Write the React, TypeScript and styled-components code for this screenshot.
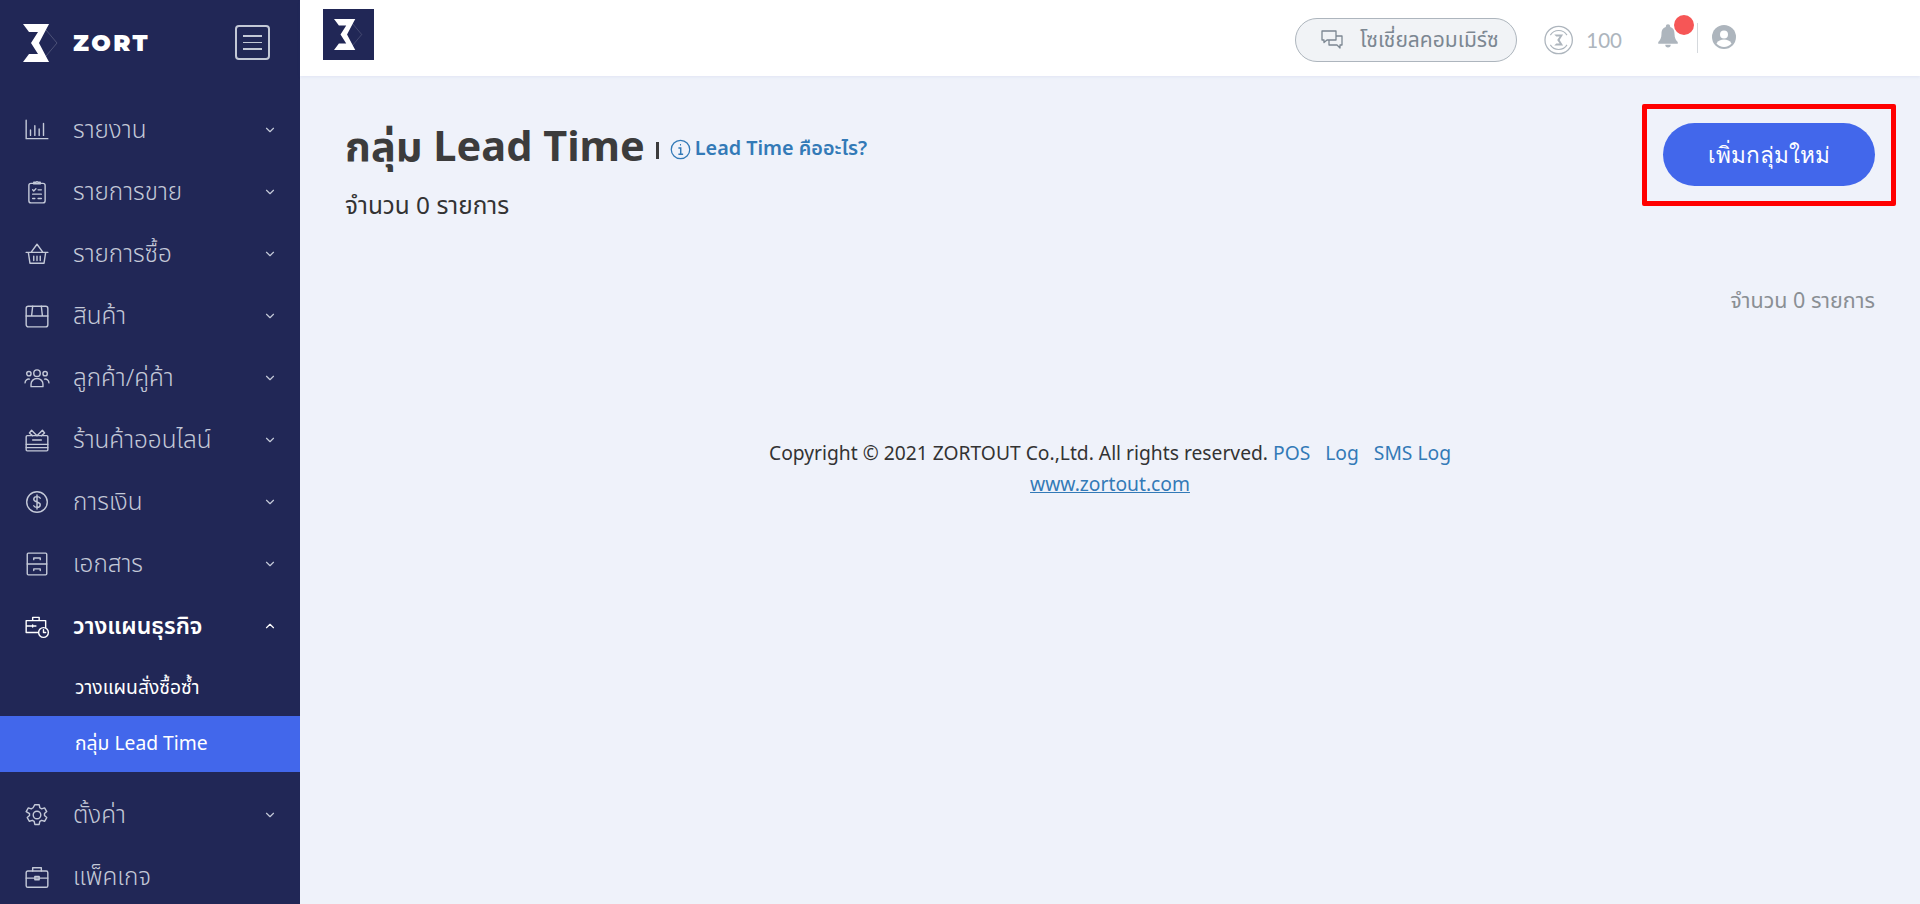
import React from 'react';
import styled, { createGlobalStyle } from 'styled-components';
import { ChevronDown, ChevronUp } from 'lucide-react';

const Global = createGlobalStyle`
  html, body { margin: 0; padding: 0; height: 100%; overflow: hidden; }
  body { font-family: "Noto Sans", "Noto Sans Thai", "Noto Sans CJK SC", sans-serif; background: #eff2fa; }
  * { box-sizing: border-box; }
`;

const Page = styled.div`display: flex; width: 1920px; height: 904px; overflow: hidden;`;
const Sidebar = styled.aside`width: 300px; flex: none; background: #212756; display: flex; flex-direction: column; overflow: hidden;`;
const Brand = styled.div`height: 99px; flex: none; display: flex; align-items: center; padding: 0 30px 14px 23px;`;
const BrandName = styled.span`
  margin-left: 14px; font-family: "Montserrat", "Lato", sans-serif; font-weight: 900; font-size: 23px;
  letter-spacing: 2.5px; color: #fff; flex: 1;
`;
const MenuToggle = styled.button`
  width: 35px; height: 35px; padding: 0; background: none; border: 2px solid #c3c8d6; border-radius: 4px;
  display: flex; flex-direction: column; justify-content: center; align-items: center; gap: 5px;
  & > i { display: block; width: 19px; height: 1.5px; background: #c3c8d6; }
`;
const Row = styled.div<{ $open?: boolean }>`
  height: 62px; flex: none; display: flex; align-items: center; padding: 0 23px 0 24px;
  color: ${p => (p.$open ? '#fff' : '#c4c9d8')};
  font-size: ${p => (p.$open ? '23px' : '24.3px')}; font-weight: ${p => (p.$open ? 600 : 300)};
`;
const RowIcon = styled.span`width: 26px; height: 26px; flex: none; display: flex; align-items: center; justify-content: center; margin-right: 23px; & svg { display: block; }`;
const RowLabel = styled.span`flex: 1; white-space: nowrap;`;
const SubMenu = styled.div`flex: none; padding: 3px 0 12px;`;
const SubRow = styled.div<{ $active?: boolean }>`
  height: 56px; display: flex; align-items: center; padding-left: 75px;
  font-size: 19.3px; color: #fff; white-space: nowrap;
  background: ${p => (p.$active ? '#4267eb' : 'transparent')};
`;
const Right = styled.div`flex: 1; min-width: 0; display: flex; flex-direction: column;`;
const Topbar = styled.header`
  height: 76px; flex: none; background: #fff; display: flex; align-items: center; padding: 0 184px 0 23px;
  box-shadow: 0 1px 3px rgba(60,80,160,.08);
`;
const LogoTile = styled.div`width: 51px; height: 51px; background: #212756; display: flex; align-items: center; justify-content: center; margin-top: -8px;`;
const TopActions = styled.div`margin-left: auto; display: flex; align-items: center;`;
const SocialPill = styled.div`
  width: 222px; height: 44px; border: 1px solid #adb5bd; border-radius: 22px; background: #f1f3f6;
  display: flex; align-items: center; padding-left: 24px; gap: 16px;
  color: #7c8792; font-size: 21px; white-space: nowrap; margin-top: 4px;
`;
const Coin = styled.div`display: flex; align-items: center; margin-left: 27px; gap: 13px; color: #adb5bd; font-family: "Lato", sans-serif; font-size: 20.5px; margin-top: 4px; width: 78px;`;
const Bell = styled.div`position: relative; margin-left: 33px; width: 26px; height: 26px; margin-top: -6px;`;
const Dot = styled.span`position: absolute; top: -7px; left: 19px; width: 20px; height: 20px; border-radius: 50%; background: #f65656;`;
const Divider = styled.span`width: 1px; height: 30px; background: #d5d9dd; margin: 0 14px 0 16px;`;
const Avatar = styled.div`width: 24px; height: 24px; margin-top: -3px;`;
const Main = styled.main`flex: 1; padding: 46px 45px 0 45px; display: flex; flex-direction: column;`;
const Head = styled.div`display: flex; justify-content: space-between; align-items: flex-start;`;
const TitleLine = styled.div`display: flex; align-items: center; height: 54px; margin-top: -4px;`;
const Title = styled.h1`margin: 0; font-size: 41.5px; font-weight: 700; color: #3c3c3c; white-space: nowrap; line-height: 54px;`;
const Sep = styled.span`width: 3px; height: 17px; background: #3c3c3c; margin: 10px 11px 0 11px;`;
const HelpLink = styled.a`display: flex; align-items: center; gap: 4px; color: #337ab7; font-size: 19.8px; font-weight: 600; white-space: nowrap; margin-top: 8px;`;
const Count = styled.div`font-size: 24.4px; color: #333; margin-top: 18px; line-height: 30px;`;
const AddButton = styled.button`
  position: relative; width: 212px; height: 63px; margin: 1px 0 0; border: none; border-radius: 32px;
  background: #4267eb; color: #fff; font: 500 22.6px "Noto Sans", sans-serif; white-space: nowrap;
`;
const Highlight = styled.span`position: absolute; left: -21px; top: -19px; width: 254px; height: 102px; border: 5px solid #ff0000; border-radius: 2px; pointer-events: none;`;
const RightCount = styled.div`text-align: right; color: #8a8f94; font-size: 21.5px; margin-top: 65px; line-height: 30px;`;
const Footer = styled.footer`margin-top: 122px; text-align: center; color: #333; font-size: 19.25px; line-height: 31px;`;
const FootLink = styled.a<{ $gap: number }>`color: #337ab7; margin-left: ${p => p.$gap}px;`;
const SiteLink = styled.a`color: #337ab7; text-decoration: underline;`;

const Mark = ({ h, color = '#fff' }: { h: number; color?: string }) => (
  <svg width={(h * 36) / 38} height={h} viewBox="0 0 36 38" fill="none">
    <path d="M14 0 L30 19 L14 38 M22 0 L6 19 L22 38" stroke={color} strokeOpacity=".2" strokeWidth="1" transform="translate(4 0)" />
    <path d="M0 0 H26 L16 19 L26 38 H0 L6 30 H15 L8 19 L15 8 H6 Z" fill={color} />
  </svg>
);

const S = { width: 26, height: 26, viewBox: '0 0 24 24', fill: 'none', stroke: '#c4c9d8', strokeWidth: 1.3, strokeLinecap: 'round' as const, strokeLinejoin: 'round' as const };

const icons: Record<string, React.ReactNode> = {
  report: <svg {...S}><path d="M2 3v17h20M6 17v-5M10 17V8M14 17v-6M18 17V6" /></svg>,
  clip: <svg {...S}><rect x="4.500" y="4" width="15" height="18" rx="2" /><path d="M9 4V3h2a1.200 1.200 0 0 1 2 0h2v1.500H9zM8 10l1 1 2-2M13 10h3M8 14h8M8 18h2M13 18h3" /></svg>,
  basket: <svg {...S}><path d="M2 10.500h20M4 10.500l1.500 10h13l1.500-10M6.500 10.500L12 3l5.500 7.500M9 14v4M12 14v4M15 14v4" /></svg>,
  box: <svg {...S}><rect x="2" y="3" width="20" height="19" rx="2" /><path d="M2 12h20M8 3l-1 9M16 3l1 9" /></svg>,
  people: <svg {...S}><circle cx="12" cy="7.500" r="3" /><circle cx="4.500" cy="8" r="2" /><circle cx="19.500" cy="8" r="2" /><path d="M6.500 20v-2.500a5.500 5 0 0 1 11 0V20zM1 16.500a3.500 3.500 0 0 1 4-3.500M23 16.500a3.500 3.500 0 0 0-4-3.500" /></svg>,
  gift: <svg {...S}><rect x="2" y="8" width="20" height="14" rx="1" /><path d="M2 16h20M2 19h20M12 8L7 3 5 5.500 8 8M12 8l5-5 2 2.500L16 8M8 12h8" /></svg>,
  dollar: <svg {...S}><circle cx="12" cy="12" r="9.500" /><path d="M15 8.500c-.5-1-1.500-1.500-3-1.500-2 0-3 1-3 2.500s1.500 2 3 2.500 3 1 3 2.500-1 2.500-3 2.500c-1.500 0-2.500-.5-3-1.500M12 5.500v13" /></svg>,
  cabinet: <svg {...S}><rect x="3" y="2" width="18" height="20" rx="1" /><path d="M3 12h18M9 8V6.500h6V8M9 18v-1.500h6V18" /></svg>,
  plan: <svg {...S} stroke="#fff"><path d="M2 7h18v11H2zM8 7V4h6v3M2 12h9M8 11v2" /><circle cx="18" cy="18" r="4.500" fill="#212756" /><path d="M18 15.500V18h2" /></svg>,
  gear: <svg {...S}><circle cx="12" cy="12" r="3.500" /><path d="M10 2.500h4l.6 2.800 1.700 1 2.700-.9 2 3.400-2.100 1.900v1.800l2.100 1.900-2 3.400-2.700-.9-1.700 1-.6 2.800h-4l-.6-2.800-1.700-1-2.700.9-2-3.400 2.100-1.900v-1.800L2 8.800l2-3.400 2.700.9 1.700-1z" /></svg>,
  case: <svg {...S}><rect x="2" y="6.500" width="20" height="15" rx="1.500" /><path d="M8 6.500V3.500h8v3M2 13h20M10 11.500h4v3h-4z" /></svg>,
};

const items = [
  ['report', 'รายงาน'], ['clip', 'รายการขาย'], ['basket', 'รายการซื้อ'], ['box', 'สินค้า'],
  ['people', 'ลูกค้า/คู่ค้า'], ['gift', 'ร้านค้าออนไลน์'], ['dollar', 'การเงิน'], ['cabinet', 'เอกสาร'],
];

const MenuRow = ({ icon, label, open, noArrow }: { icon: string; label: string; open?: boolean; noArrow?: boolean }) => (
  <Row $open={open}>
    <RowIcon>{icons[icon]}</RowIcon>
    <RowLabel>{label}</RowLabel>
    {!noArrow && (open ? <ChevronUp size={14} color="#fff" /> : <ChevronDown size={14} color="#c4c9d8" />)}
  </Row>
);

export default function App() {
  return (
    <Page>
      <Global />
      <Sidebar>
        <Brand>
          <Mark h={38} />
          <BrandName>ZORT</BrandName>
          <MenuToggle aria-label="menu"><i /><i /><i /></MenuToggle>
        </Brand>
        {items.map(([i, l]) => <MenuRow key={l} icon={i} label={l} />)}
        <MenuRow icon="plan" label="วางแผนธุรกิจ" open />
        <SubMenu>
          <SubRow>วางแผนสั่งซื้อซ้ำ</SubRow>
          <SubRow $active>กลุ่ม Lead Time</SubRow>
        </SubMenu>
        <MenuRow icon="gear" label="ตั้งค่า" />
        <MenuRow icon="case" label="แพ็คเกจ" noArrow />
      </Sidebar>
      <Right>
        <Topbar>
          <LogoTile><Mark h={31} /></LogoTile>
          <TopActions>
            <SocialPill>
              <svg width="24" height="24" viewBox="0 0 24 24" fill="none" stroke="#7c8792" strokeWidth="1.300" strokeLinejoin="round">
                <path d="M2 3h14v9H7l-3 2.500V12H2zM16 8h6v9h-2v3l-3-3H9v-5" />
              </svg>
              โซเชี่ยลคอมเมิร์ซ
            </SocialPill>
            <Coin>
              <svg width="30" height="30" viewBox="0 0 30 30" fill="none" stroke="#adb5bd">
                <circle cx="15" cy="15" r="14" strokeWidth="1.300" />
                <path d="M6.500 10a10 10 0 0 1 17 0M23.500 20a10 10 0 0 1-17 0" strokeWidth="1.100" />
                <path d="M10.500 9.500h9l-3.500 5.500 3.500 5.500h-9l2-2h3.500l-2.500-3.500 2.500-3.500h-3.500z" fill="#adb5bd" stroke="none" />
              </svg>
              100
            </Coin>
            <Bell>
              <svg width="26" height="26" viewBox="0 0 24 24" fill="#adb5bd">
                <path d="M12 2a2 2 0 0 0-2 2v.6C7 5.500 6 8 6 11c0 4-1.500 6-3 7.500V20h18v-1.500C19.500 17 18 15 18 11c0-3-1-5.500-4-6.400V4a2 2 0 0 0-2-2zM9.500 21a2.500 2.500 0 0 0 5 0z" />
              </svg>
              <Dot />
            </Bell>
            <Divider />
            <Avatar>
              <svg width="24" height="24" viewBox="0 0 24 24">
                <circle cx="12" cy="12" r="12" fill="#adb5bd" />
                <circle cx="12" cy="9.500" r="4" fill="#fff" />
                <path d="M4.500 18.500c1.500-3 4.500-4 7.500-4s6 1 7.500 4A10 10 0 0 1 12 22a10 10 0 0 1-7.500-3.500z" fill="#fff" />
              </svg>
            </Avatar>
          </TopActions>
        </Topbar>
        <Main>
          <Head>
            <div>
              <TitleLine>
                <Title>กลุ่ม Lead Time</Title>
                <Sep />
                <HelpLink>
                  <svg width="21" height="21" viewBox="0 0 20 20" fill="none" stroke="#337ab7" strokeWidth="1.200">
                    <circle cx="10" cy="10" r="8.800" />
                    <path d="M8 8.500h2.200V14M8 14.500h4.500M9.500 5.500h1" strokeWidth="1.400" />
                  </svg>
                  Lead Time คืออะไร?
                </HelpLink>
              </TitleLine>
              <Count>จำนวน 0 รายการ</Count>
            </div>
            <AddButton>เพิ่มกลุ่มใหม่<Highlight /></AddButton>
          </Head>
          <RightCount>จำนวน 0 รายการ</RightCount>
          <Footer>
            Copyright © 2021 ZORTOUT Co.,Ltd. All rights reserved.
            <FootLink $gap={5}>POS</FootLink><FootLink $gap={15}>Log</FootLink><FootLink $gap={15}>SMS Log</FootLink>
            <br />
            <SiteLink>www.zortout.com</SiteLink>
          </Footer>
        </Main>
      </Right>
    </Page>
  );
}
